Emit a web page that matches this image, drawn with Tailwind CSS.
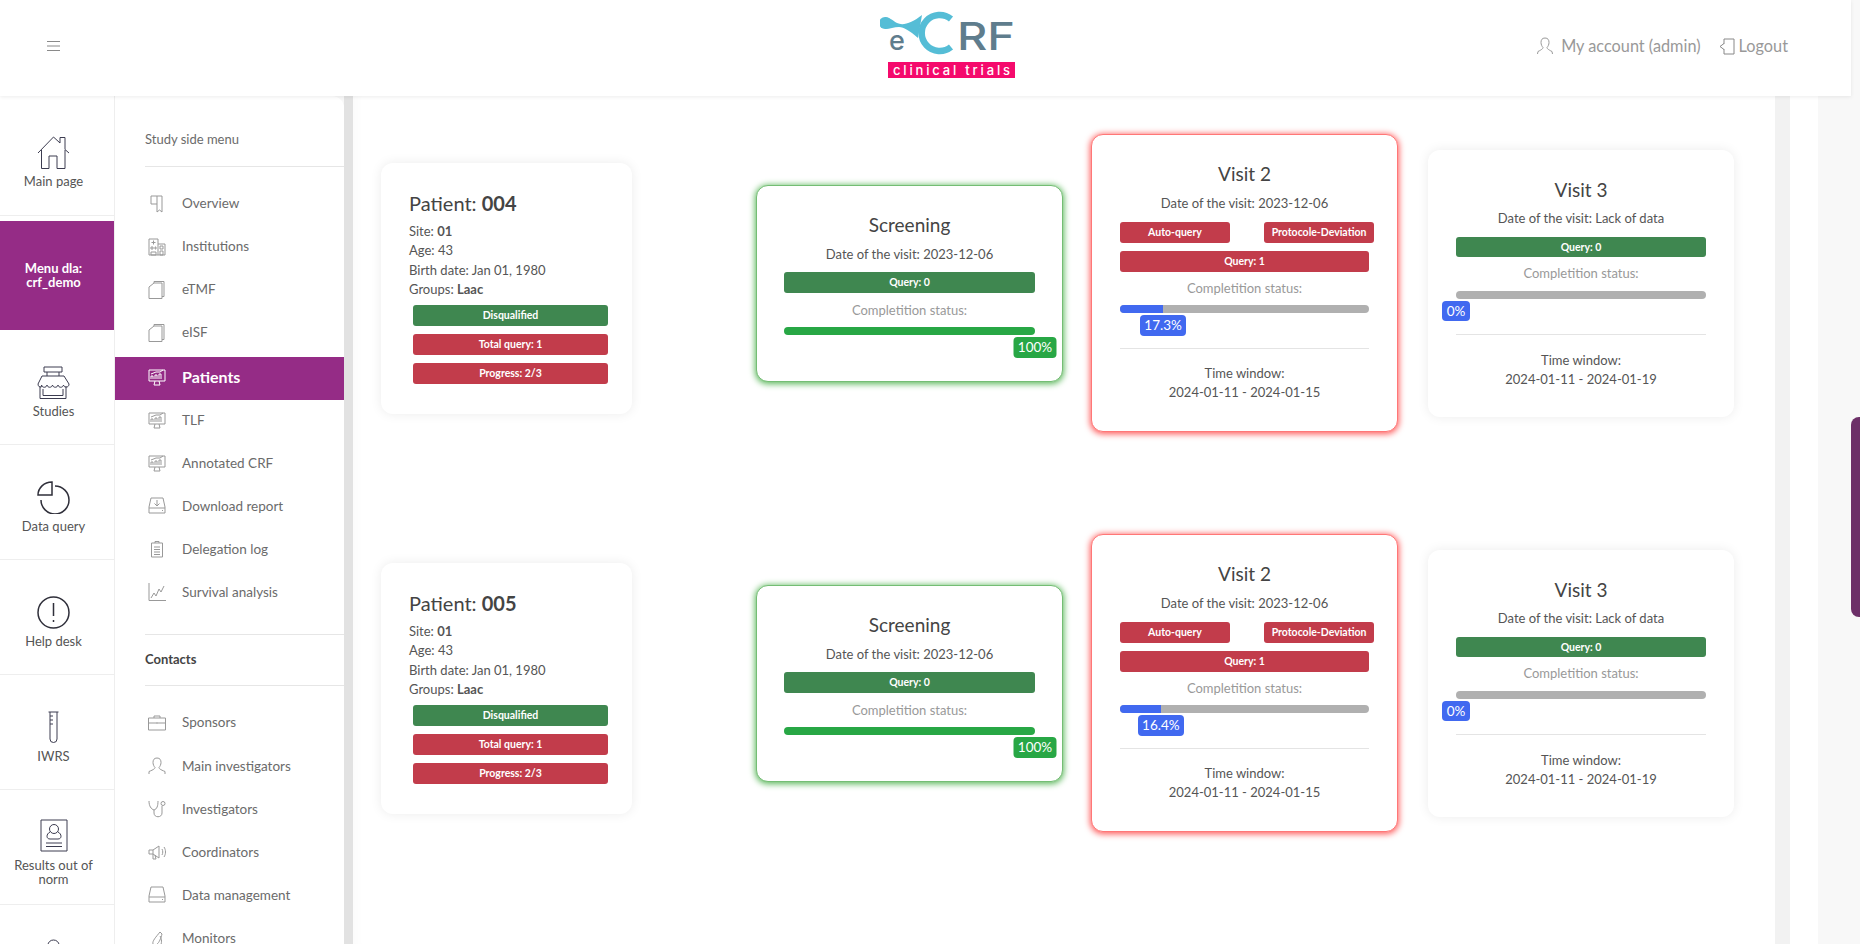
<!DOCTYPE html>
<html lang="en">
<head>
  <meta charset="UTF-8">
  <title>eCRF clinical trials</title>
  <script src="https://cdn.jsdelivr.net/npm/@tailwindcss/browser@4"></script>
</head>
<body class="h-screen overflow-hidden bg-[#f8f8f8] font-['Lato','Liberation_Sans',sans-serif] text-[#555]">

  <!-- Header -->
  <header class="relative z-20 h-[96px] w-[1851px] bg-white shadow-[0_1px_4px_rgba(0,0,0,0.08)] flex items-center pb-[4px]">
    <div class="w-[107px] flex justify-center">
      <svg width="14" height="12" viewBox="0 0 14 12" fill="none" stroke="#8a8a8a" stroke-width="1"><path d="M0 1.500h13M0 6h13M0 10.500h13"/></svg>
    </div>
    <div class="ml-[773px]">
      <svg width="136" height="70" viewBox="0 0 136 70" class="block">
        <circle cx="5" cy="12" r="6" fill="#55bdd6"/>
        <path d="M5 6C9 6 12 9 17 12 23 15 32 12 42 4L38 27C30 20 24 16 19 16 14 16 10 18 5 18Z" fill="#55bdd6"/>
        <path d="M71 8A18 18 0 1 0 71 36" fill="none" stroke="#55bdd6" stroke-width="6.500"/>
        <text x="9" y="39" font-family="Inter" font-size="27" font-weight="500" fill="#5f7d8d">e</text>
        <text x="77" y="39" font-family="Inter" font-size="38" font-weight="500" fill="#5f7d8d" textLength="58" lengthAdjust="spacingAndGlyphs">RF</text>
        <rect x="8" y="51" width="127" height="16" fill="#f50a6c"/>
        <text x="71.500" y="63.500" text-anchor="middle" font-family="Inter" font-size="13" font-weight="500" fill="#fff" textLength="117">clinical trials</text>
      </svg>
    </div>
    <div class="ml-auto mr-[63px] flex items-center text-[16.300px] text-[#999]">
      <svg width="16" height="18" viewBox="0 0 16 18" fill="none" stroke="#999" class="mr-[8px]"><path d="M8 1c-3 0-4 2-4 4.500 0 2 1 4 2 5 0 1-1 2-5 4l-.500 2.500M8 1c3 0 4 2 4 4.500 0 2-1 4-2 5 0 1 1 2 5 4l.500 2.500"/></svg>
      <span>My account (admin)</span>
      <svg width="16" height="17" viewBox="0 0 16 17" fill="none" stroke="#888" class="ml-[18px] mr-[4px]"><path d="M5 1h10v15H5v-5M5 6V1M5 5.500 1 8.500l4 3"/></svg>
      <span>Logout</span>
    </div>
  </header>

  <div class="flex h-[848px]">
    <!-- Icon rail -->
    <nav class="w-[115px] shrink-0 bg-white border-r border-[#eee] text-center text-[13px] leading-[14.500px] text-[#555]">
      <a class="block h-[120px] pt-[40px] pr-[7px] border-b border-[#eee]">
        <svg width="33" height="33" viewBox="0 0 33 33" fill="none" stroke="#3c3c50" class="mx-auto block"><path d="M1 17 16.500 1 23 7V1.500h5v12l4 3.500M4.500 14v18.500h7.500V20h8v12.500h8V14"/></svg>
        <div class="mt-[5px]">Main page</div>
      </a>
      <div class="mt-[5px] h-[109px] pr-[7px] bg-[#952c86] text-white font-bold flex items-center justify-center leading-[14px] pb-[2px]">Menu dla:<br>crf_demo</div>
      <a class="block h-[115px] pt-[36px] pr-[7px] border-b border-[#eee]">
        <svg width="33" height="33" viewBox="0 0 33 33" fill="none" stroke="#3c3c50" class="mx-auto block"><path d="M7 1h18v5H7zM10 6v4M22 6v4M5 10h22l5 8c0 4-5 4-5.500 1-.500 3-5 3-5.500 0-.500 3-5 3-5.500 0-.500 3-5 3-5.500 0-.500 3-5 3-5.500 0C6 22 1 22 1 18zM3 20v12.500h26V20M6 23v6.500h20V23"/></svg>
        <div class="mt-[5px]">Studies</div>
      </a>
      <a class="block h-[115px] pt-[36px] pr-[7px] border-b border-[#eee]">
        <svg width="33" height="33" viewBox="0 0 33 33" fill="none" stroke="#2f2f3a" stroke-width="1.500" class="mx-auto block"><path d="M15 1v13H1C1 7 7 1 15 1z"/><path d="M18 5a14 14 0 1 1-14 14"/></svg>
        <div class="mt-[5px]">Data query</div>
      </a>
      <a class="block h-[115px] pt-[36px] pr-[7px] border-b border-[#eee]">
        <svg width="33" height="33" viewBox="0 0 33 33" fill="none" stroke="#2f2f3a" stroke-width="1.500" class="mx-auto block"><circle cx="16.500" cy="16.500" r="15.500"/><path d="M16.500 7v13M16.500 24v2"/></svg>
        <div class="mt-[5px]">Help desk</div>
      </a>
      <a class="block h-[115px] pt-[36px] pr-[7px] border-b border-[#eee]">
        <svg width="33" height="33" viewBox="0 0 33 33" fill="none" stroke="#3c3c50" class="mx-auto block"><path d="M11.500 1h10M13 1v27a3.500 3.500 0 0 0 7 0V1M13 5h3M13 9h3M13 13h3"/></svg>
        <div class="mt-[5px]">IWRS</div>
      </a>
      <a class="block h-[115px] pt-[29px] pr-[7px] border-b border-[#eee]">
        <svg width="28" height="33" viewBox="0 0 28 33" fill="none" stroke="#3c3c50" class="mx-auto block"><path d="M1 1h26v31H1z"/><circle cx="14" cy="10" r="4.500"/><path d="M10 13c-4 2-4 7 0 7h8c4 0 4-5 0-7M6 24h16M6 27.500h16"/></svg>
        <div class="mt-[6px] leading-[14px]">Results out of<br>norm</div>
      </a>
      <a class="block pt-[34px] pr-[7px]">
        <svg width="33" height="33" viewBox="0 0 33 33" fill="none" stroke="#3c3c50" class="mx-auto block"><path d="M11 10V6a5.500 5 0 0 1 11 0v4M3 10h27v20H3z"/></svg>
      </a>
    </nav>

    <!-- Study side menu -->
    <aside class="relative z-10 w-[229px] shrink-0 bg-white rounded-tr-[12px] text-[13.500px] text-[#6b6b6b]">
      <div class="ml-[30px] h-[71px] flex items-center pt-[18px] text-[13px] border-b border-[#e6e6e6]">Study side menu</div>
      <ul class="pt-[15px]">
        <li class="h-[43px] pl-[33px] flex items-center gap-[16px]">
          <svg width="18" height="18" viewBox="0 0 18 18" fill="none" stroke="#999" class="shrink-0"><path d="M3 1h11v16l-2.500-2L9 17V1M3 1v8h6"/></svg>Overview</li>
        <li class="h-[43px] pl-[33px] flex items-center gap-[16px]">
          <svg width="18" height="18" viewBox="0 0 18 18" fill="none" stroke="#999" class="shrink-0"><path d="M1 1h9v16H1zM10 6h7v11h-7M3 9h2v2H3zM7 9h1v2H7zM12 8h3v3h-3zM3 14h5v3H3zM12 13h3v4h-3zM5.500 2.500v4M3.500 4.500h4"/></svg>Institutions</li>
        <li class="h-[43px] pl-[33px] flex items-center gap-[16px]">
          <svg width="18" height="18" viewBox="0 0 18 18" fill="none" stroke="#999" class="shrink-0"><path d="M1 6 6 2h8v15.500H1zM6 2V.5h10v15h-2"/></svg>eTMF</li>
        <li class="h-[43px] pl-[33px] flex items-center gap-[16px]">
          <svg width="18" height="18" viewBox="0 0 18 18" fill="none" stroke="#999" class="shrink-0"><path d="M1 6 6 2h8v15.500H1zM6 2V.5h10v15h-2"/></svg>eISF</li>
        <li class="h-[43px] mt-[3px] pl-[33px] flex items-center gap-[16px] bg-[#952c86] text-white font-bold text-[16px] pb-[3px]">
          <svg width="18" height="18" viewBox="0 0 18 18" fill="none" stroke="#fff" class="shrink-0"><path d="M1 2h16v11H1zM7 13l-1 4h6l-1-4M3 11V8h2v3M7 11V7h2v4M11 11V6h2v5M3 6l5-2 4 0 3-2"/></svg>Patients</li>
        <li class="h-[43px] pl-[33px] flex items-center gap-[16px] pb-[3px]">
          <svg width="18" height="18" viewBox="0 0 18 18" fill="none" stroke="#999" class="shrink-0"><path d="M1 2h16v11H1zM7 13l-1 4h6l-1-4M3 11V8h2v3M7 11V7h2v4M11 11V6h2v5M3 6l5-2 4 0 3-2"/></svg>TLF</li>
        <li class="h-[43px] pl-[33px] flex items-center gap-[16px] pb-[3px]">
          <svg width="18" height="18" viewBox="0 0 18 18" fill="none" stroke="#999" class="shrink-0"><path d="M1 2h16v11H1zM7 13l-1 4h6l-1-4M3 11V8h2v3M7 11V7h2v4M11 11V6h2v5M3 6l5-2 4 0 3-2"/></svg>Annotated CRF</li>
        <li class="h-[43px] pl-[33px] flex items-center gap-[16px] pb-[3px]">
          <svg width="18" height="18" viewBox="0 0 18 18" fill="none" stroke="#999" class="shrink-0"><path d="M3 1h12l2 9v6H1v-6zM1 11h16M9 3v6M6.500 6.500 9 9l2.500-2.500M14 13.500h1"/></svg>Download report</li>
        <li class="h-[43px] pl-[33px] flex items-center gap-[16px] pb-[3px]">
          <svg width="18" height="18" viewBox="0 0 18 18" fill="none" stroke="#999" class="shrink-0"><path d="M3.500 3h11v14h-11zM7 3V1.500h4V3M6 7h6M6 9.500h6M6 12h6M6 14.500h6"/></svg>Delegation log</li>
        <li class="h-[43px] pl-[33px] flex items-center gap-[16px] pb-[3px]">
          <svg width="18" height="18" viewBox="0 0 18 18" fill="none" stroke="#999" class="shrink-0"><path d="M1 0v17.500h17M3 15l3-5 2 3 3-7 2 3 3-6"/></svg>Survival analysis</li>
      </ul>
      <div class="ml-[30px] mt-[19px] h-[52px] flex items-center border-y border-[#e6e6e6] font-bold text-[#444] text-[13px]">Contacts</div>
      <ul class="pt-[15px]">
        <li class="h-[43.200px] pl-[33px] flex items-center gap-[16px]">
          <svg width="18" height="18" viewBox="0 0 18 18" fill="none" stroke="#999" class="shrink-0"><path d="M.500 4h17v12H.500zM.500 9h17M6 4V2h6v2M9 8.500v1"/></svg>Sponsors</li>
        <li class="h-[43.200px] pl-[33px] flex items-center gap-[16px]">
          <svg width="18" height="18" viewBox="0 0 18 18" fill="none" stroke="#999" class="shrink-0"><path d="M9 1C6 1 5 3 5 5.500c0 2 1 4 2 5 0 1-1 2-6 4v2.500M9 1c3 0 4 2 4 4.500 0 2-1 4-2 5 0 1 1 2 6 4v2.500"/></svg>Main investigators</li>
        <li class="h-[43.200px] pl-[33px] flex items-center gap-[16px]">
          <svg width="18" height="18" viewBox="0 0 18 18" fill="none" stroke="#999" class="shrink-0"><path d="M1 1c0 5 2 8 5 9 3-1 4-4 4-9M6 10v3c0 5 8 5 8 0V6"/><circle cx="15" cy="3.500" r="2"/></svg>Investigators</li>
        <li class="h-[43.200px] pl-[33px] flex items-center gap-[16px]">
          <svg width="18" height="18" viewBox="0 0 18 18" fill="none" stroke="#999" class="shrink-0"><path d="M1 7h4l6-4v12l-6-4H1zM5 7v4M5 11v5h3l-1-4M14 6c1 2 1 4 0 6M16 4c2 3 2 7 0 10"/></svg>Coordinators</li>
        <li class="h-[43.200px] pl-[33px] flex items-center gap-[16px]">
          <svg width="18" height="18" viewBox="0 0 18 18" fill="none" stroke="#999" class="shrink-0"><path d="M3 1h12l2 9v6H1v-6zM1 11h16M14 13.500h1"/></svg>Data management</li>
        <li class="h-[43.200px] pl-[33px] flex items-center gap-[16px]">
          <svg width="18" height="18" viewBox="0 0 18 18" fill="none" stroke="#999" class="shrink-0"><path d="M2 17h12M5 14c-1-3 3-7 7-12l2 2c-1 4-3 9-5 10M12 6c2 3 2 7 0 11"/></svg>Monitors</li>
      </ul>
    </aside>

    <div class="w-[9px] shrink-0 bg-[#e2e2e2]"></div>

    <!-- Patient rows -->
    <main class="w-[1422px] shrink-0 bg-white shadow-[inset_12px_0_14px_-12px_rgba(0,0,0,0.03)] pl-[28px] pt-[35px] flex flex-col gap-[96px] overflow-hidden">

      <div class="grid grid-cols-[375px_336px_336px_305px] items-center h-[304px]">
        <div class="w-[251px] h-[251px] mt-[10px] rounded-[12px] bg-white shadow-[0_0_12px_rgba(0,0,0,0.08)] pl-[28px] pr-[24px] pt-[27px] text-[13px] leading-[19.500px]">
          <h2 class="text-[20px] leading-[26px] text-[#444] mb-[6px]">Patient: <b>004</b></h2>
          <p>Site: <b>01</b></p>
          <p>Age: 43</p>
          <p>Birth date: Jan 01, 1980</p>
          <p>Groups: <b>Laac</b></p>
          <div class="ml-[4px] w-[195px] mt-[5px] flex flex-col gap-[8px] text-[10.500px] font-bold text-white text-center leading-[21px]">
            <div class="bg-[#3f8750] rounded-[3px]">Disqualified</div>
            <div class="bg-[#c23c4b] rounded-[3px]">Total query: 1</div>
            <div class="bg-[#c23c4b] rounded-[3px]">Progress: 2/3</div>
          </div>
        </div>

        <div class="w-[307px] h-[197px] rounded-[12px] bg-white border border-[#74bd74] shadow-[0_1px_6px_1px_#5cb85c] px-[27px] pt-[26px] text-center text-[13px]">
          <h3 class="text-[19px] leading-[26px] text-[#444]">Screening</h3>
          <p class="mt-[6px] leading-[20px]">Date of the visit: 2023-12-06</p>
          <div class="mt-[8px] bg-[#3f8750] rounded-[3px] text-[10.500px] font-bold text-white leading-[21px]">Query: 0</div>
          <p class="mt-[7px] leading-[20px] text-[#999]">Completition status:</p>
          <div class="mt-[7px] relative h-[8px] rounded-full bg-[#28a745]">
            <span class="absolute left-full top-[10px] -translate-x-1/2 w-[43px] h-[21px] rounded-[4px] bg-[#28a745] text-white text-[13.500px] leading-[21px]">100%</span>
          </div>
        </div>

        <div class="w-[307px] h-[298px] -ml-[1px] rounded-[12px] bg-white border border-[#f77] shadow-[0_1px_6px_1px_#ff5a5a] px-[28px] pt-[26px] text-center text-[13px]">
          <h3 class="text-[19px] leading-[26px] text-[#444]">Visit 2</h3>
          <p class="mt-[6px] leading-[20px]">Date of the visit: 2023-12-06</p>
          <div class="mt-[9px] flex gap-[34px] text-[10.500px] font-bold text-white leading-[21px]">
            <div class="w-[110px] shrink-0 bg-[#c23c4b] rounded-[3px]">Auto-query</div>
            <div class="w-[110px] shrink-0 bg-[#c23c4b] rounded-[3px]">Protocole-Deviation</div>
          </div>
          <div class="mt-[8px] bg-[#c23c4b] rounded-[3px] text-[10.500px] font-bold text-white leading-[21px]">Query: 1</div>
          <p class="mt-[6px] leading-[20px] text-[#999]">Completition status:</p>
          <div class="mt-[7px] relative h-[8px] rounded-full bg-[#b0b0b0]">
            <div class="h-full rounded-l-full bg-[#4169f0]" style="width:17.3%"></div>
            <span class="absolute left-[17.3%] top-[10px] -translate-x-1/2 w-[46px] h-[21px] rounded-[4px] bg-[#4169f0] text-white text-[13.500px] leading-[21px]">17.3%</span>
          </div>
          <div class="mt-[35px] border-t border-[#e4e4e4] pt-[15px] leading-[19px]">Time window:<br>2024-01-11 - 2024-01-15</div>
        </div>

        <div class="w-[306px] h-[267px] rounded-[12px] bg-white shadow-[0_0_12px_rgba(0,0,0,0.08)] px-[28px] pt-[27px] text-center text-[13px]">
          <h3 class="text-[19px] leading-[26px] text-[#444]">Visit 3</h3>
          <p class="mt-[5px] leading-[20px]">Date of the visit: Lack of data</p>
          <div class="mt-[9px] bg-[#3f8750] rounded-[3px] text-[10.500px] font-bold text-white leading-[20px]">Query: 0</div>
          <p class="mt-[6px] leading-[20px] text-[#999]">Completition status:</p>
          <div class="mt-[8px] relative h-[8px] rounded-full bg-[#b0b0b0]">
            <span class="absolute left-0 top-[10px] -translate-x-1/2 w-[28px] h-[20px] rounded-[4px] bg-[#4169f0] text-white text-[13.500px] leading-[20px]">0%</span>
          </div>
          <div class="mt-[35px] border-t border-[#e4e4e4] pt-[16px] leading-[19px]">Time window:<br>2024-01-11 - 2024-01-19</div>
        </div>
      </div>

      <div class="grid grid-cols-[375px_336px_336px_305px] items-center h-[304px]">
        <div class="w-[251px] h-[251px] mt-[10px] rounded-[12px] bg-white shadow-[0_0_12px_rgba(0,0,0,0.08)] pl-[28px] pr-[24px] pt-[27px] text-[13px] leading-[19.500px]">
          <h2 class="text-[20px] leading-[26px] text-[#444] mb-[6px]">Patient: <b>005</b></h2>
          <p>Site: <b>01</b></p>
          <p>Age: 43</p>
          <p>Birth date: Jan 01, 1980</p>
          <p>Groups: <b>Laac</b></p>
          <div class="ml-[4px] w-[195px] mt-[5px] flex flex-col gap-[8px] text-[10.500px] font-bold text-white text-center leading-[21px]">
            <div class="bg-[#3f8750] rounded-[3px]">Disqualified</div>
            <div class="bg-[#c23c4b] rounded-[3px]">Total query: 1</div>
            <div class="bg-[#c23c4b] rounded-[3px]">Progress: 2/3</div>
          </div>
        </div>

        <div class="w-[307px] h-[197px] rounded-[12px] bg-white border border-[#74bd74] shadow-[0_1px_6px_1px_#5cb85c] px-[27px] pt-[26px] text-center text-[13px]">
          <h3 class="text-[19px] leading-[26px] text-[#444]">Screening</h3>
          <p class="mt-[6px] leading-[20px]">Date of the visit: 2023-12-06</p>
          <div class="mt-[8px] bg-[#3f8750] rounded-[3px] text-[10.500px] font-bold text-white leading-[21px]">Query: 0</div>
          <p class="mt-[7px] leading-[20px] text-[#999]">Completition status:</p>
          <div class="mt-[7px] relative h-[8px] rounded-full bg-[#28a745]">
            <span class="absolute left-full top-[10px] -translate-x-1/2 w-[43px] h-[21px] rounded-[4px] bg-[#28a745] text-white text-[13.500px] leading-[21px]">100%</span>
          </div>
        </div>

        <div class="w-[307px] h-[298px] -ml-[1px] rounded-[12px] bg-white border border-[#f77] shadow-[0_1px_6px_1px_#ff5a5a] px-[28px] pt-[26px] text-center text-[13px]">
          <h3 class="text-[19px] leading-[26px] text-[#444]">Visit 2</h3>
          <p class="mt-[6px] leading-[20px]">Date of the visit: 2023-12-06</p>
          <div class="mt-[9px] flex gap-[34px] text-[10.500px] font-bold text-white leading-[21px]">
            <div class="w-[110px] shrink-0 bg-[#c23c4b] rounded-[3px]">Auto-query</div>
            <div class="w-[110px] shrink-0 bg-[#c23c4b] rounded-[3px]">Protocole-Deviation</div>
          </div>
          <div class="mt-[8px] bg-[#c23c4b] rounded-[3px] text-[10.500px] font-bold text-white leading-[21px]">Query: 1</div>
          <p class="mt-[6px] leading-[20px] text-[#999]">Completition status:</p>
          <div class="mt-[7px] relative h-[8px] rounded-full bg-[#b0b0b0]">
            <div class="h-full rounded-l-full bg-[#4169f0]" style="width:16.4%"></div>
            <span class="absolute left-[16.4%] top-[10px] -translate-x-1/2 w-[46px] h-[21px] rounded-[4px] bg-[#4169f0] text-white text-[13.500px] leading-[21px]">16.4%</span>
          </div>
          <div class="mt-[35px] border-t border-[#e4e4e4] pt-[15px] leading-[19px]">Time window:<br>2024-01-11 - 2024-01-15</div>
        </div>

        <div class="w-[306px] h-[267px] rounded-[12px] bg-white shadow-[0_0_12px_rgba(0,0,0,0.08)] px-[28px] pt-[27px] text-center text-[13px]">
          <h3 class="text-[19px] leading-[26px] text-[#444]">Visit 3</h3>
          <p class="mt-[5px] leading-[20px]">Date of the visit: Lack of data</p>
          <div class="mt-[9px] bg-[#3f8750] rounded-[3px] text-[10.500px] font-bold text-white leading-[20px]">Query: 0</div>
          <p class="mt-[6px] leading-[20px] text-[#999]">Completition status:</p>
          <div class="mt-[8px] relative h-[8px] rounded-full bg-[#b0b0b0]">
            <span class="absolute left-0 top-[10px] -translate-x-1/2 w-[28px] h-[20px] rounded-[4px] bg-[#4169f0] text-white text-[13.500px] leading-[20px]">0%</span>
          </div>
          <div class="mt-[35px] border-t border-[#e4e4e4] pt-[16px] leading-[19px]">Time window:<br>2024-01-11 - 2024-01-19</div>
        </div>
      </div>
    </main>

    <div class="w-[15px] shrink-0 bg-[#f2f2f2]"></div>
    <div class="w-[28px] shrink-0 bg-white"></div>
  </div>

  <!-- Settings tab on the right edge -->
  <div class="fixed right-0 top-[417px] w-[9px] h-[200px] rounded-l-[8px] bg-[#6d3068]"></div>
</body>
</html>
